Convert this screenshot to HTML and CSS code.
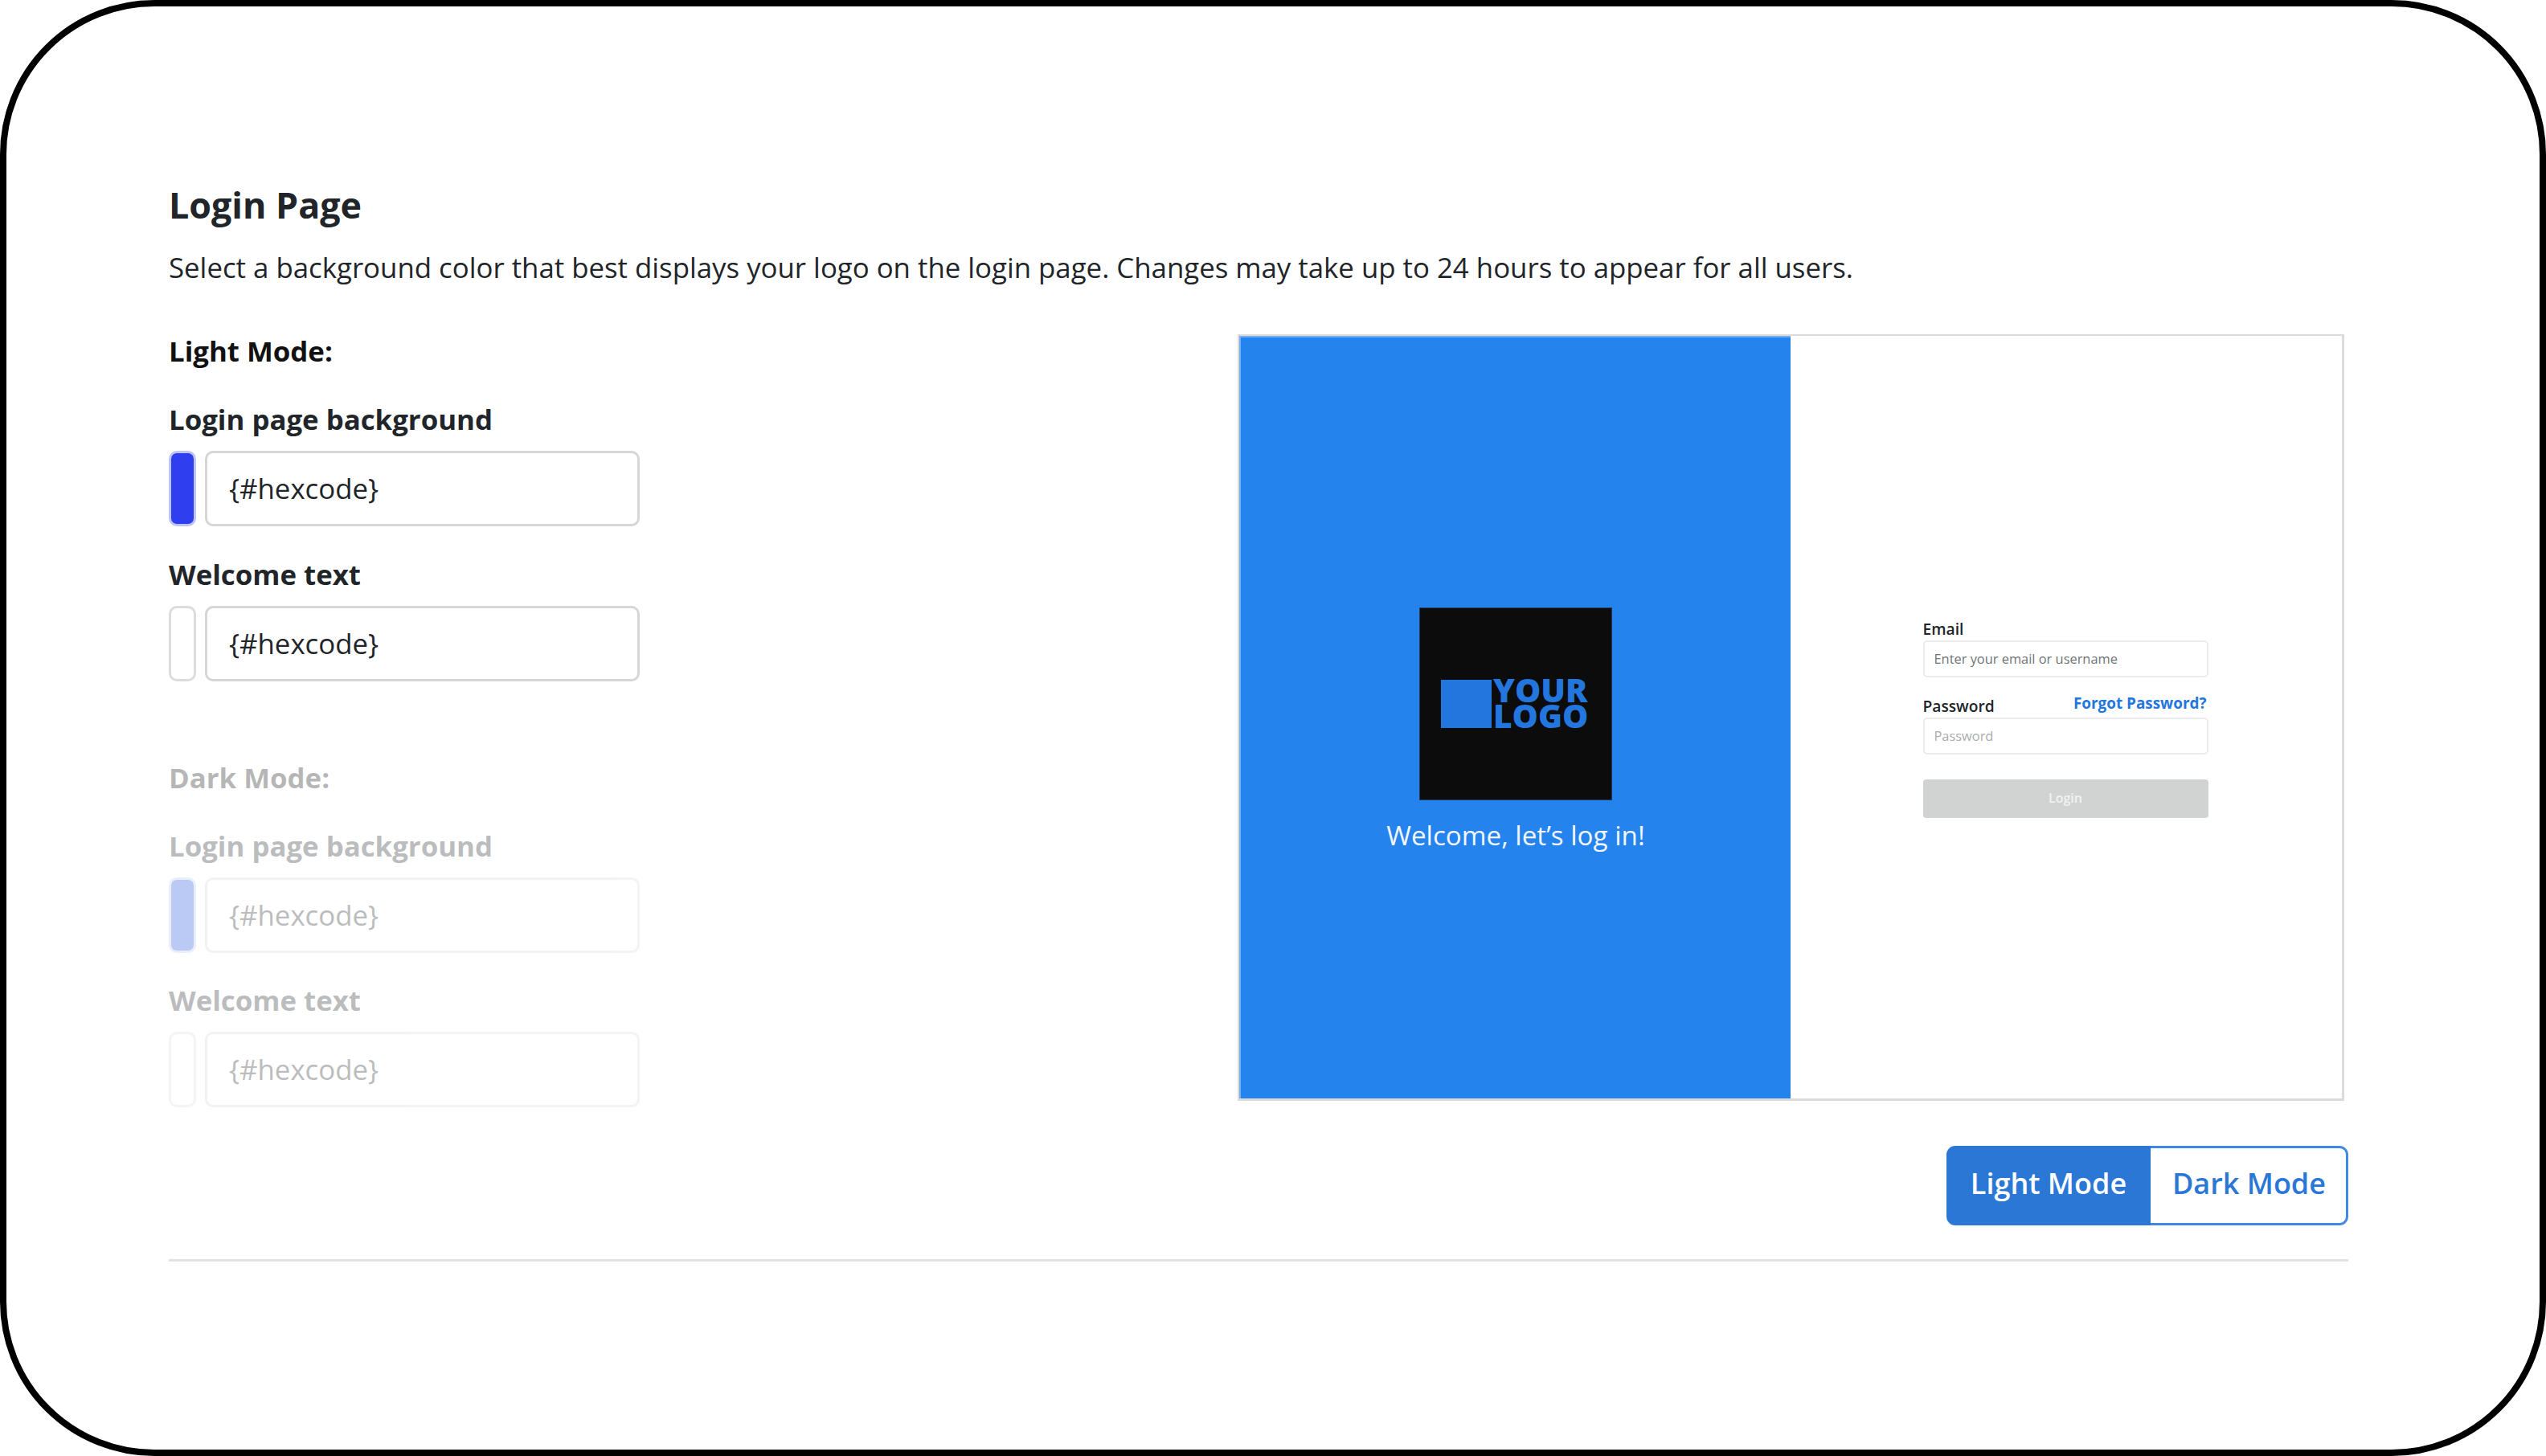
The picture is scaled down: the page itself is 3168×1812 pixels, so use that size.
FILE: index.html
```html
<!DOCTYPE html>
<html lang="en">
<head>
<meta charset="utf-8">
<title>Login Page</title>
<link rel="stylesheet" href="styles.css">
</head>
<body>
<main class="frame">
  <h1 class="title">Login Page</h1>
  <p class="intro">Select a background color that best displays your logo on the login page. Changes may take up to 24 hours to appear for all users.</p>
  <div class="columns">
    <section class="settings">
      <div class="mode">
        <h2 class="mode-title">Light Mode:</h2>
        <div class="field">
          <div class="label">Login page background</div>
          <div class="picker"><span class="swatch swatch-blue"></span><div class="hex">{#hexcode}</div></div>
        </div>
        <div class="field">
          <div class="label">Welcome text</div>
          <div class="picker"><span class="swatch"></span><div class="hex">{#hexcode}</div></div>
        </div>
      </div>
      <div class="mode mode-disabled">
        <h2 class="mode-title">Dark Mode:</h2>
        <div class="field">
          <div class="label">Login page background</div>
          <div class="picker"><span class="swatch swatch-blue"></span><div class="hex">{#hexcode}</div></div>
        </div>
        <div class="field">
          <div class="label">Welcome text</div>
          <div class="picker"><span class="swatch"></span><div class="hex">{#hexcode}</div></div>
        </div>
      </div>
    </section>
    <section class="side">
      <div class="preview">
        <div class="brand">
          <div class="logo">
            <span class="logo-mark"></span>
            <span class="logo-text">YOUR<br>LOGO</span>
          </div>
          <div class="welcome">Welcome, let’s log in!</div>
        </div>
        <div class="login">
          <div class="login-form">
            <div class="login-label">Email</div>
            <div class="login-input">Enter your email or username</div>
            <div class="login-row">
              <span class="login-label">Password</span>
              <span class="forgot">Forgot Password?</span>
            </div>
            <div class="login-input login-input-faint">Password</div>
            <div class="login-button">Login</div>
          </div>
        </div>
      </div>
      <div class="toggle">
        <div class="toggle-item toggle-active">Light Mode</div>
        <div class="toggle-item toggle-idle">Dark Mode</div>
      </div>
    </section>
  </div>
  <div class="rule"></div>
</main>
</body>
</html>
```

FILE: styles.css
```css
* { box-sizing: border-box; }
html, body { margin: 0; padding: 0; background: #fff; }
body { font-family: "Open Sans", "Noto Sans", sans-serif; color: #212529; }

.frame {
  width: 3168px;
  height: 1812px;
  border: 8px solid #000;
  border-radius: 192px;
  padding: 217px 238px 0 202px;
  background: #fff;
  overflow: hidden;
}

.title { margin: 0; font-size: 44.8px; line-height: 60px; font-weight: 700; }
.intro { margin: 23px 0 0; font-size: 34.8px; line-height: 50px; font-weight: 400; white-space: nowrap; }

.columns { display: flex; justify-content: space-between; margin-top: 54px; }

.settings { display: flex; flex-direction: column; gap: 95px; }
.mode-title { margin: 0; font-size: 34.8px; line-height: 50px; font-weight: 700; color: #111; }
.mode-disabled { opacity: 0.3; }
.mode-disabled .field + .field { margin-top: 34px; }
.mode-disabled .swatch-blue { background: #2052de; border-color: #bcc6f5; }

.field { margin-top: 35px; }
.label { font-size: 34.8px; line-height: 50px; font-weight: 700; }
.picker { display: flex; gap: 11px; margin-top: 14px; height: 94px; }

.swatch {
  width: 34px;
  border: 3px solid #dcdcde;
  border-radius: 10px;
  background: #fff;
}
.swatch-blue { background: #2f3fef; border-color: #bcc6f5; }

.hex {
  width: 541px;
  padding-left: 27px;
  border: 3px solid #d6d6d8;
  border-radius: 10px;
  font-size: 34.8px;
  line-height: 88px;
}

.side { display: flex; flex-direction: column; align-items: flex-end; padding-top: 4px; }

.preview {
  display: flex;
  width: 1377px;
  height: 954px;
  margin-right: 5px;
  border-style: solid;
  border-color: #dbdbdb;
  border-width: 2px 3px 3px 2px;
  background: #fff;
}

.brand {
  display: flex;
  flex-direction: column;
  align-items: center;
  width: 686px;
  padding: 338px 0 0 2px;
  background: #2583ee;
  box-shadow: inset 2px 2px 0 #76aef2;
}

.logo {
  display: flex;
  gap: 2px;
  width: 240px;
  height: 240px;
  padding: 90px 0 0 27px;
  background: #0c0c0c;
  box-shadow: inset 0 0 0 1px #1d3a5c;
}
.logo-mark { width: 63px; height: 60px; background: #2376dd; }
.logo-text {
  font-size: 40.6px;
  line-height: 32px;
  margin-top: -3px;
  font-weight: 800;
  color: #2376dd;
}

.welcome { margin-top: 21px; font-size: 33.2px; line-height: 46px; color: #f2f6fe; }

.login { flex: 1; display: flex; align-items: center; justify-content: center; padding-right: 2px; }
.login-form { width: 355px; padding-top: 1px; }
.login-label { font-size: 19.2px; line-height: 27px; font-weight: 600; color: #212529; }
.login-input {
  height: 46px;
  margin-top: 1px;
  padding-left: 12px;
  border: 2px solid #ececee;
  border-radius: 5px;
  font-size: 16.4px;
  line-height: 42px;
  color: #6f7478;
}
.login-input-faint { color: #a9adb0; }
.login-row { display: flex; justify-content: space-between; align-items: flex-start; margin-top: 22px; padding-right: 2px; }
.forgot { margin-top: -3px; font-size: 18.9px; line-height: 27px; font-weight: 700; color: #2376dd; }
.login-button {
  height: 48px;
  margin-top: 31px;
  border-radius: 4px;
  background: #d1d3d3;
  color: #f1f2f2;
  font-size: 16px;
  line-height: 46px;
  font-weight: 600;
  text-align: center;
}

.toggle {
  display: flex;
  width: 500px;
  height: 99px;
  margin-top: 56px;
}
.toggle-item {
  font-size: 36px;
  font-weight: 600;
  text-align: center;
}
.toggle-active {
  flex: 0 0 254px;
  border-radius: 11px 0 0 11px;
  background: #2a77d6;
  color: #fff;
  line-height: 93px;
}
.toggle-idle {
  flex: 1;
  padding-left: 2px;
  border: 3px solid #3f89e5;
  border-left: 0;
  border-radius: 0 11px 11px 0;
  background: #fff;
  color: #2a77d6;
  line-height: 87px;
}

.rule { height: 3px; margin-top: 42px; background: #e2e3e5; }
```
